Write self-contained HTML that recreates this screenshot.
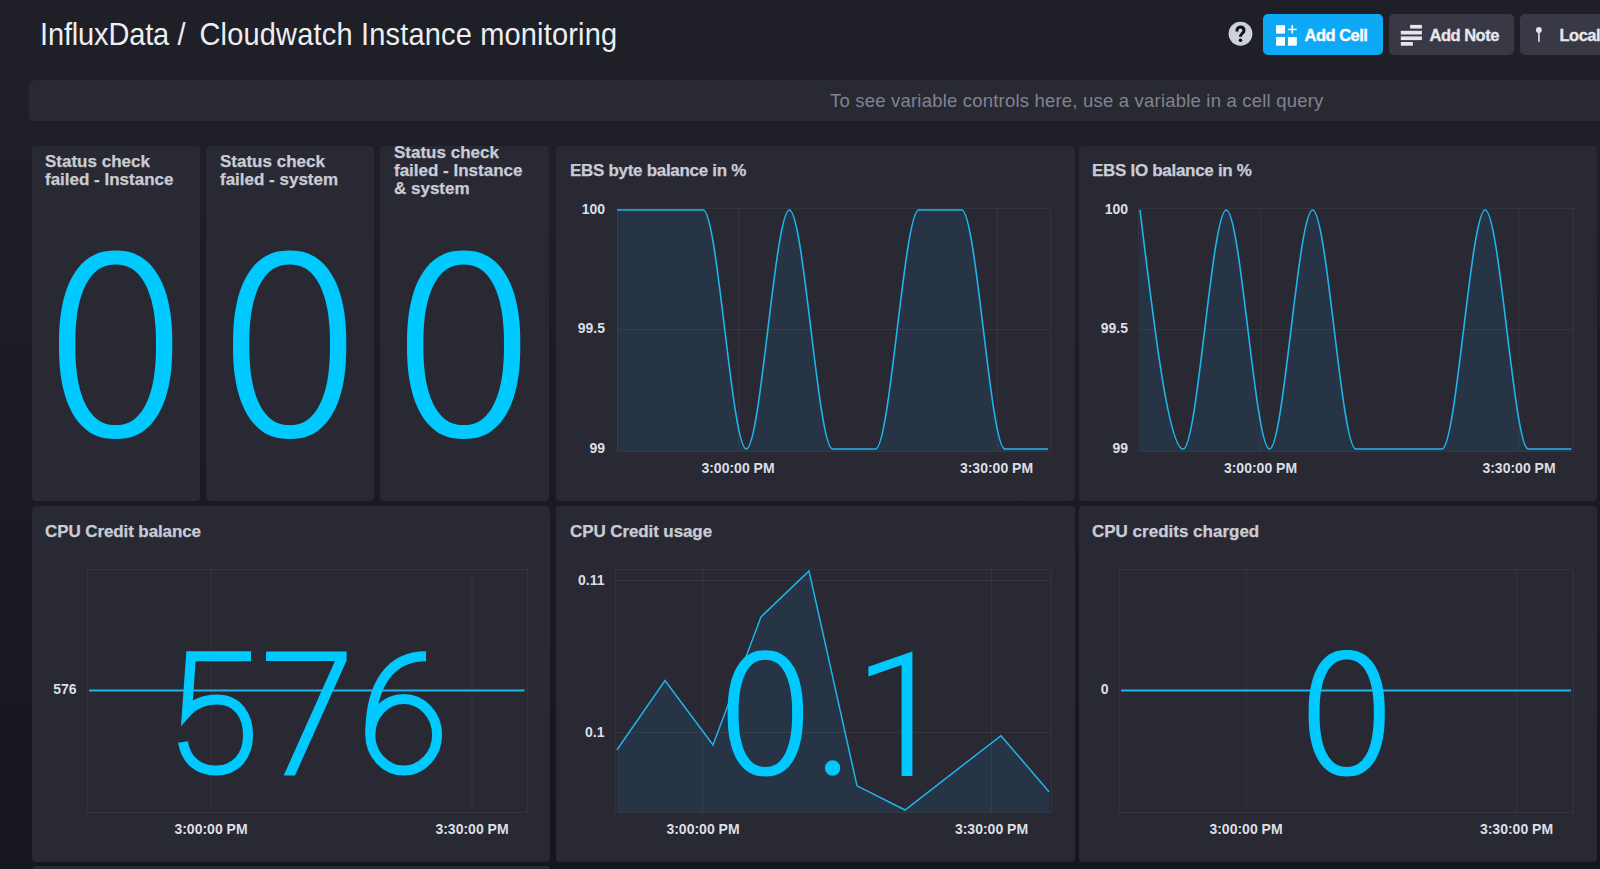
<!DOCTYPE html>
<html><head><meta charset="utf-8">
<style>
*{margin:0;padding:0;box-sizing:border-box}
html,body{width:1600px;height:869px;overflow:hidden}
body{background:linear-gradient(180deg,#1f1f27 0%,#1f1f27 12%,#16161f 100%);font-family:"Liberation Sans",sans-serif;position:relative}
.abs{position:absolute}
.title{top:16px;font-size:29px;line-height:34px;color:#eceef2;white-space:nowrap;transform:scaleY(1.075);transform-origin:0 0}
.vars{left:29px;top:80px;width:1600px;height:41px;background:#292932;border-radius:5px}
.vtext{left:830px;top:90px;font-size:18.5px;line-height:22px;color:#808394;white-space:nowrap;letter-spacing:0.2px}
.cell{background:#292933;border-radius:4px}
.ct{font-size:17px;font-weight:bold;color:#c9ccd6;line-height:18px;white-space:nowrap;-webkit-text-stroke:0.25px currentColor;margin-top:1px}
.btn{border-radius:5px;height:41px;top:14px}
.bt{font-size:16.5px;line-height:20px;-webkit-text-stroke:0.3px currentColor;font-weight:bold;color:#fff;white-space:nowrap;letter-spacing:-0.5px}
svg text.tk{font-family:"Liberation Sans",sans-serif;font-size:14px;font-weight:bold;fill:#dcdfe6}
</style></head><body>
<div class="abs title" style="left:40px;letter-spacing:-0.15px">InfluxData</div>
<div class="abs title" style="left:177.5px">/</div>
<div class="abs title" style="left:199.5px;letter-spacing:0.17px">Cloudwatch Instance monitoring</div>
<svg class="abs" style="left:1228px;top:21px" width="25" height="25" viewBox="0 0 25 25"><circle cx="12.5" cy="12.75" r="11.9" fill="#cfd1d9"/><path d="M8.9,10.4 C8.9,7.4 10.5,6 12.4,6 C14.5,6 16,7.4 16,9.4 C16,12 12.5,12.6 12.5,15.8" fill="none" stroke="#101014" stroke-width="3"/><circle cx="12.5" cy="19.3" r="1.8" fill="#101014"/></svg>
<div class="abs btn" style="left:1263px;width:119.5px;background:#0da8f6"></div>
<div class="abs btn" style="left:1388.5px;width:125.5px;background:#393946"></div>
<div class="abs btn" style="left:1520px;width:100px;background:#393946"></div>
<svg class="abs" style="left:1263px;top:14px" width="340" height="41" viewBox="1263 14 340 41">
<rect x="1276" y="25.2" width="9" height="8.4" fill="#fff"/>
<rect x="1276" y="37" width="9" height="8.7" fill="#fff"/>
<rect x="1288" y="37" width="8.8" height="8.7" fill="#fff"/>
<rect x="1288" y="28.7" width="8.6" height="1.5" fill="#fff"/>
<rect x="1291.5" y="25.2" width="1.5" height="8.4" fill="#fff"/>
<rect x="1410.1" y="24.9" width="11.8" height="3.7" fill="#e4e6ec"/>
<rect x="1400.8" y="30.8" width="21.1" height="3.7" fill="#e4e6ec"/>
<rect x="1400.8" y="36.4" width="21.1" height="3.7" fill="#e4e6ec"/>
<rect x="1400.8" y="42" width="12.1" height="3.7" fill="#e4e6ec"/>
<circle cx="1538.9" cy="30" r="2.9" fill="#e4e6ec"/>
<rect x="1538.1" y="31" width="1.6" height="11" rx="0.8" fill="#e4e6ec"/>
</svg>
<div class="abs bt" style="left:1304.5px;top:24.7px">Add Cell</div>
<div class="abs bt" style="left:1429.5px;top:24.7px;color:#e7e8ee">Add Note</div>
<div class="abs bt" style="left:1559.5px;top:24.7px;color:#e7e8ee">Local</div>
<div class="abs vars"></div>
<div class="abs vtext">To see variable controls here, use a variable in a cell query</div>

<div class="abs cell" style="left:32px;top:146px;width:168px;height:355px"></div>
<div class="abs cell" style="left:206px;top:146px;width:168px;height:355px"></div>
<div class="abs cell" style="left:380px;top:146px;width:169px;height:355px"></div>
<div class="abs cell" style="left:556px;top:146px;width:519px;height:355px"></div>
<div class="abs cell" style="left:1079px;top:146px;width:518px;height:355px"></div>
<div class="abs cell" style="left:32px;top:506px;width:518px;height:356px"></div>
<div class="abs cell" style="left:556px;top:506px;width:519px;height:356px"></div>
<div class="abs cell" style="left:1079px;top:506px;width:518px;height:356px"></div>
<div class="abs cell" style="left:32px;top:866px;width:518px;height:40px"></div>

<div class="abs ct" style="left:45px;top:152px">Status check<br>failed - Instance</div>
<div class="abs ct" style="left:220px;top:152px">Status check<br>failed - system</div>
<div class="abs ct" style="left:394px;top:143px">Status check<br>failed - Instance<br>&amp; system</div>
<div class="abs ct" style="left:570px;top:161px;letter-spacing:-0.3px">EBS byte balance in %</div>
<div class="abs ct" style="left:1092px;top:161px;letter-spacing:-0.3px">EBS IO balance in %</div>
<div class="abs ct" style="left:45px;top:522px;letter-spacing:-0.1px">CPU Credit balance</div>
<div class="abs ct" style="left:570px;top:522px;letter-spacing:-0.1px">CPU Credit usage</div>
<div class="abs ct" style="left:1092px;top:522px">CPU credits charged</div>

<svg class="abs" style="left:0;top:0" width="1600" height="869" viewBox="0 0 1600 869">
<path d="M617.0,210.0 C631.4,210.0 645.7,210.0 660.1,210.0 C674.5,210.0 688.8,210.0 703.2,210.0 C717.6,210.0 731.9,449.0 746.3,449.0 C760.7,449.0 775.0,210.0 789.4,210.0 C803.8,210.0 818.1,449.0 832.5,449.0 C846.9,449.0 861.2,449.0 875.6,449.0 C890.0,449.0 904.3,210.0 918.7,210.0 C933.1,210.0 947.4,210.0 961.8,210.0 C976.2,210.0 990.5,449.0 1004.9,449.0 C1019.3,449.0 1033.6,449.0 1048.0,449.0 L1048.0,451.5 L617,451.5 Z" fill="#263445"/><rect x="617.5" y="208.5" width="433.0" height="243.0" fill="none" stroke="rgba(255,255,255,0.055)" stroke-width="1"/><line x1="738.5" y1="208.5" x2="738.5" y2="451.5" stroke="rgba(255,255,255,0.055)" stroke-width="1"/><line x1="997.5" y1="208.5" x2="997.5" y2="451.5" stroke="rgba(255,255,255,0.055)" stroke-width="1"/><line x1="617.5" y1="329.5" x2="1050.5" y2="329.5" stroke="rgba(255,255,255,0.055)" stroke-width="1"/><path d="M617.0,210.0 C631.4,210.0 645.7,210.0 660.1,210.0 C674.5,210.0 688.8,210.0 703.2,210.0 C717.6,210.0 731.9,449.0 746.3,449.0 C760.7,449.0 775.0,210.0 789.4,210.0 C803.8,210.0 818.1,449.0 832.5,449.0 C846.9,449.0 861.2,449.0 875.6,449.0 C890.0,449.0 904.3,210.0 918.7,210.0 C933.1,210.0 947.4,210.0 961.8,210.0 C976.2,210.0 990.5,449.0 1004.9,449.0 C1019.3,449.0 1033.6,449.0 1048.0,449.0" fill="none" stroke="#1fb5ec" stroke-width="1.6"/><text x="605.0" y="213.5" text-anchor="end" class="tk">100</text><text x="605.0" y="333.0" text-anchor="end" class="tk">99.5</text><text x="605.0" y="452.5" text-anchor="end" class="tk">99</text><text x="738.0" y="473.0" text-anchor="middle" class="tk">3:00:00 PM</text><text x="996.5" y="473.0" text-anchor="middle" class="tk">3:30:00 PM</text><path d="M1140.0,210.0 C1154.4,329.5 1168.8,449.0 1183.2,449.0 C1197.5,449.0 1211.9,210.0 1226.3,210.0 C1240.7,210.0 1255.1,449.0 1269.5,449.0 C1283.8,449.0 1298.2,210.0 1312.6,210.0 C1327.0,210.0 1341.4,449.0 1355.8,449.0 C1370.1,449.0 1384.5,449.0 1398.9,449.0 C1413.3,449.0 1427.7,449.0 1442.0,449.0 C1456.4,449.0 1470.8,210.0 1485.2,210.0 C1499.6,210.0 1514.0,449.0 1528.3,449.0 C1542.7,449.0 1557.1,449.0 1571.5,449.0 L1571.5,451.5 L1140,451.5 Z" fill="#263445"/><rect x="1138.5" y="208.5" width="435.0" height="243.0" fill="none" stroke="rgba(255,255,255,0.055)" stroke-width="1"/><line x1="1260.5" y1="208.5" x2="1260.5" y2="451.5" stroke="rgba(255,255,255,0.055)" stroke-width="1"/><line x1="1519.0" y1="208.5" x2="1519.0" y2="451.5" stroke="rgba(255,255,255,0.055)" stroke-width="1"/><line x1="1138.5" y1="329.5" x2="1573.5" y2="329.5" stroke="rgba(255,255,255,0.055)" stroke-width="1"/><path d="M1140.0,210.0 C1154.4,329.5 1168.8,449.0 1183.2,449.0 C1197.5,449.0 1211.9,210.0 1226.3,210.0 C1240.7,210.0 1255.1,449.0 1269.5,449.0 C1283.8,449.0 1298.2,210.0 1312.6,210.0 C1327.0,210.0 1341.4,449.0 1355.8,449.0 C1370.1,449.0 1384.5,449.0 1398.9,449.0 C1413.3,449.0 1427.7,449.0 1442.0,449.0 C1456.4,449.0 1470.8,210.0 1485.2,210.0 C1499.6,210.0 1514.0,449.0 1528.3,449.0 C1542.7,449.0 1557.1,449.0 1571.5,449.0" fill="none" stroke="#1fb5ec" stroke-width="1.6"/><text x="1128.0" y="213.5" text-anchor="end" class="tk">100</text><text x="1128.0" y="333.0" text-anchor="end" class="tk">99.5</text><text x="1128.0" y="452.5" text-anchor="end" class="tk">99</text><text x="1260.5" y="473.0" text-anchor="middle" class="tk">3:00:00 PM</text><text x="1519.0" y="473.0" text-anchor="middle" class="tk">3:30:00 PM</text><rect x="87.5" y="569.5" width="440.0" height="243.0" fill="none" stroke="rgba(255,255,255,0.055)" stroke-width="1"/><line x1="211.0" y1="569.5" x2="211.0" y2="812.5" stroke="rgba(255,255,255,0.055)" stroke-width="1"/><line x1="472.0" y1="569.5" x2="472.0" y2="812.5" stroke="rgba(255,255,255,0.055)" stroke-width="1"/><line x1="89" y1="690.5" x2="524.5" y2="690.5" stroke="#1fb5ec" stroke-width="2"/><text x="76.5" y="694.0" text-anchor="end" class="tk">576</text><text x="211.0" y="834.0" text-anchor="middle" class="tk">3:00:00 PM</text><text x="472.0" y="834.0" text-anchor="middle" class="tk">3:30:00 PM</text><path d="M617.0,749.7 L665.0,680.5 L713.0,745.0 L761.0,616.8 L809.0,570.9 L857.0,785.8 L905.0,810.0 L953.0,772.8 L1001.0,735.7 L1049.0,791.7 L1049.0,812.5 L617,812.5 Z" fill="#263445"/><rect x="615.5" y="569.5" width="436.0" height="243.0" fill="none" stroke="rgba(255,255,255,0.055)" stroke-width="1"/><line x1="703.0" y1="569.5" x2="703.0" y2="812.5" stroke="rgba(255,255,255,0.055)" stroke-width="1"/><line x1="991.5" y1="569.5" x2="991.5" y2="812.5" stroke="rgba(255,255,255,0.055)" stroke-width="1"/><line x1="615.5" y1="580.5" x2="1051.5" y2="580.5" stroke="rgba(255,255,255,0.055)" stroke-width="1"/><line x1="615.5" y1="732.5" x2="1051.5" y2="732.5" stroke="rgba(255,255,255,0.055)" stroke-width="1"/><path d="M617.0,749.7 L665.0,680.5 L713.0,745.0 L761.0,616.8 L809.0,570.9 L857.0,785.8 L905.0,810.0 L953.0,772.8 L1001.0,735.7 L1049.0,791.7" fill="none" stroke="#1fb5ec" stroke-width="1.5" stroke-linejoin="miter"/><text x="604.5" y="585.0" text-anchor="end" class="tk">0.11</text><text x="604.5" y="737.0" text-anchor="end" class="tk">0.1</text><text x="703.0" y="834.0" text-anchor="middle" class="tk">3:00:00 PM</text><text x="991.5" y="834.0" text-anchor="middle" class="tk">3:30:00 PM</text><rect x="1119.5" y="569.5" width="454.0" height="243.0" fill="none" stroke="rgba(255,255,255,0.055)" stroke-width="1"/><line x1="1246.0" y1="569.5" x2="1246.0" y2="812.5" stroke="rgba(255,255,255,0.055)" stroke-width="1"/><line x1="1516.5" y1="569.5" x2="1516.5" y2="812.5" stroke="rgba(255,255,255,0.055)" stroke-width="1"/><line x1="1121" y1="690.5" x2="1571" y2="690.5" stroke="#1fb5ec" stroke-width="2"/><text x="1108.5" y="694.0" text-anchor="end" class="tk">0</text><text x="1246.0" y="834.0" text-anchor="middle" class="tk">3:00:00 PM</text><text x="1516.5" y="834.0" text-anchor="middle" class="tk">3:30:00 PM</text>
<path d="M172.3,344.8 L172.2,354.0 L171.9,361.5 L171.4,368.2 L170.7,374.6 L169.7,380.7 L168.6,386.4 L167.3,391.8 L165.8,397.0 L164.1,401.9 L162.2,406.5 L160.1,410.9 L157.8,414.9 L155.4,418.7 L152.8,422.2 L150.0,425.3 L147.1,428.1 L143.9,430.7 L140.7,432.9 L137.2,434.7 L133.6,436.3 L129.7,437.5 L125.7,438.3 L121.2,438.8 L115.7,439.0 L110.1,438.8 L105.6,438.3 L101.6,437.5 L97.7,436.3 L94.1,434.7 L90.6,432.9 L87.4,430.7 L84.2,428.1 L81.3,425.3 L78.5,422.2 L75.9,418.7 L73.5,414.9 L71.2,410.9 L69.1,406.5 L67.2,401.9 L65.5,397.0 L64.0,391.8 L62.7,386.4 L61.6,380.7 L60.6,374.6 L59.9,368.2 L59.4,361.5 L59.1,354.0 L59.0,344.8 L59.1,335.6 L59.4,328.1 L59.9,321.4 L60.6,315.0 L61.6,308.9 L62.7,303.2 L64.0,297.8 L65.5,292.6 L67.2,287.7 L69.1,283.1 L71.2,278.7 L73.5,274.7 L75.9,270.9 L78.5,267.4 L81.3,264.3 L84.2,261.5 L87.4,258.9 L90.6,256.7 L94.1,254.9 L97.7,253.3 L101.6,252.1 L105.6,251.3 L110.1,250.8 L115.6,250.6 L121.2,250.8 L125.7,251.3 L129.7,252.1 L133.6,253.3 L137.2,254.9 L140.7,256.7 L143.9,258.9 L147.1,261.5 L150.0,264.3 L152.8,267.4 L155.4,270.9 L157.8,274.7 L160.1,278.7 L162.2,283.1 L164.1,287.7 L165.8,292.6 L167.3,297.8 L168.6,303.2 L169.7,308.9 L170.7,315.0 L171.4,321.4 L171.9,328.1 L172.2,335.6 Z M156.0,344.8 L155.9,352.7 L155.7,359.0 L155.3,364.8 L154.8,370.2 L154.2,375.3 L153.4,380.2 L152.4,384.9 L151.4,389.3 L150.1,393.4 L148.8,397.4 L147.3,401.1 L145.7,404.5 L144.0,407.7 L142.1,410.7 L140.1,413.3 L138.0,415.8 L135.8,417.9 L133.5,419.8 L131.0,421.4 L128.4,422.7 L125.7,423.7 L122.8,424.4 L119.6,424.9 L115.7,425.0 L111.7,424.9 L108.5,424.4 L105.6,423.7 L102.9,422.7 L100.3,421.4 L97.8,419.8 L95.5,417.9 L93.3,415.8 L91.2,413.3 L89.2,410.7 L87.3,407.7 L85.6,404.5 L84.0,401.1 L82.5,397.4 L81.2,393.4 L79.9,389.3 L78.9,384.9 L77.9,380.2 L77.1,375.3 L76.5,370.2 L76.0,364.8 L75.6,359.0 L75.4,352.7 L75.3,344.8 L75.4,336.9 L75.6,330.6 L76.0,324.8 L76.5,319.4 L77.1,314.3 L77.9,309.4 L78.9,304.7 L79.9,300.3 L81.2,296.2 L82.5,292.2 L84.0,288.5 L85.6,285.1 L87.3,281.9 L89.2,278.9 L91.2,276.3 L93.3,273.8 L95.5,271.7 L97.8,269.8 L100.3,268.2 L102.9,266.9 L105.6,265.9 L108.5,265.2 L111.7,264.7 L115.6,264.6 L119.6,264.7 L122.8,265.2 L125.7,265.9 L128.4,266.9 L131.0,268.2 L133.5,269.8 L135.8,271.7 L138.0,273.8 L140.1,276.3 L142.1,278.9 L144.0,281.9 L145.7,285.1 L147.3,288.5 L148.8,292.2 L150.1,296.2 L151.4,300.3 L152.4,304.7 L153.4,309.4 L154.2,314.3 L154.8,319.4 L155.3,324.8 L155.7,330.6 L155.9,336.9 Z" fill="#00c9ff" fill-rule="evenodd"/><path d="M346.3,344.8 L346.2,354.0 L345.9,361.5 L345.4,368.2 L344.7,374.6 L343.7,380.7 L342.6,386.4 L341.3,391.8 L339.8,397.0 L338.1,401.9 L336.2,406.5 L334.1,410.9 L331.8,414.9 L329.4,418.7 L326.8,422.2 L324.0,425.3 L321.1,428.1 L317.9,430.7 L314.7,432.9 L311.2,434.7 L307.6,436.3 L303.7,437.5 L299.7,438.3 L295.2,438.8 L289.7,439.0 L284.1,438.8 L279.6,438.3 L275.6,437.5 L271.7,436.3 L268.1,434.7 L264.6,432.9 L261.4,430.7 L258.2,428.1 L255.3,425.3 L252.5,422.2 L249.9,418.7 L247.5,414.9 L245.2,410.9 L243.1,406.5 L241.2,401.9 L239.5,397.0 L238.0,391.8 L236.7,386.4 L235.6,380.7 L234.6,374.6 L233.9,368.2 L233.4,361.5 L233.1,354.0 L233.0,344.8 L233.1,335.6 L233.4,328.1 L233.9,321.4 L234.6,315.0 L235.6,308.9 L236.7,303.2 L238.0,297.8 L239.5,292.6 L241.2,287.7 L243.1,283.1 L245.2,278.7 L247.5,274.7 L249.9,270.9 L252.5,267.4 L255.3,264.3 L258.2,261.5 L261.4,258.9 L264.6,256.7 L268.1,254.9 L271.7,253.3 L275.6,252.1 L279.6,251.3 L284.1,250.8 L289.6,250.6 L295.2,250.8 L299.7,251.3 L303.7,252.1 L307.6,253.3 L311.2,254.9 L314.7,256.7 L317.9,258.9 L321.1,261.5 L324.0,264.3 L326.8,267.4 L329.4,270.9 L331.8,274.7 L334.1,278.7 L336.2,283.1 L338.1,287.7 L339.8,292.6 L341.3,297.8 L342.6,303.2 L343.7,308.9 L344.7,315.0 L345.4,321.4 L345.9,328.1 L346.2,335.6 Z M330.0,344.8 L329.9,352.7 L329.7,359.0 L329.3,364.8 L328.8,370.2 L328.2,375.3 L327.4,380.2 L326.4,384.9 L325.4,389.3 L324.1,393.4 L322.8,397.4 L321.3,401.1 L319.7,404.5 L318.0,407.7 L316.1,410.7 L314.1,413.3 L312.0,415.8 L309.8,417.9 L307.5,419.8 L305.0,421.4 L302.4,422.7 L299.7,423.7 L296.8,424.4 L293.6,424.9 L289.7,425.0 L285.7,424.9 L282.5,424.4 L279.6,423.7 L276.9,422.7 L274.3,421.4 L271.8,419.8 L269.5,417.9 L267.3,415.8 L265.2,413.3 L263.2,410.7 L261.3,407.7 L259.6,404.5 L258.0,401.1 L256.5,397.4 L255.2,393.4 L253.9,389.3 L252.9,384.9 L251.9,380.2 L251.1,375.3 L250.5,370.2 L250.0,364.8 L249.6,359.0 L249.4,352.7 L249.3,344.8 L249.4,336.9 L249.6,330.6 L250.0,324.8 L250.5,319.4 L251.1,314.3 L251.9,309.4 L252.9,304.7 L253.9,300.3 L255.2,296.2 L256.5,292.2 L258.0,288.5 L259.6,285.1 L261.3,281.9 L263.2,278.9 L265.2,276.3 L267.3,273.8 L269.5,271.7 L271.8,269.8 L274.3,268.2 L276.9,266.9 L279.6,265.9 L282.5,265.2 L285.7,264.7 L289.6,264.6 L293.6,264.7 L296.8,265.2 L299.7,265.9 L302.4,266.9 L305.0,268.2 L307.5,269.8 L309.8,271.7 L312.0,273.8 L314.1,276.3 L316.1,278.9 L318.0,281.9 L319.7,285.1 L321.3,288.5 L322.8,292.2 L324.1,296.2 L325.4,300.3 L326.4,304.7 L327.4,309.4 L328.2,314.3 L328.8,319.4 L329.3,324.8 L329.7,330.6 L329.9,336.9 Z" fill="#00c9ff" fill-rule="evenodd"/><path d="M520.3,344.8 L520.2,354.0 L519.9,361.5 L519.4,368.2 L518.7,374.6 L517.7,380.7 L516.6,386.4 L515.3,391.8 L513.8,397.0 L512.1,401.9 L510.2,406.5 L508.1,410.9 L505.8,414.9 L503.4,418.7 L500.8,422.2 L498.0,425.3 L495.1,428.1 L491.9,430.7 L488.7,432.9 L485.2,434.7 L481.6,436.3 L477.7,437.5 L473.7,438.3 L469.2,438.8 L463.7,439.0 L458.1,438.8 L453.6,438.3 L449.6,437.5 L445.7,436.3 L442.1,434.7 L438.6,432.9 L435.4,430.7 L432.2,428.1 L429.3,425.3 L426.5,422.2 L423.9,418.7 L421.5,414.9 L419.2,410.9 L417.1,406.5 L415.2,401.9 L413.5,397.0 L412.0,391.8 L410.7,386.4 L409.6,380.7 L408.6,374.6 L407.9,368.2 L407.4,361.5 L407.1,354.0 L407.0,344.8 L407.1,335.6 L407.4,328.1 L407.9,321.4 L408.6,315.0 L409.6,308.9 L410.7,303.2 L412.0,297.8 L413.5,292.6 L415.2,287.7 L417.1,283.1 L419.2,278.7 L421.5,274.7 L423.9,270.9 L426.5,267.4 L429.3,264.3 L432.2,261.5 L435.4,258.9 L438.6,256.7 L442.1,254.9 L445.7,253.3 L449.6,252.1 L453.6,251.3 L458.1,250.8 L463.6,250.6 L469.2,250.8 L473.7,251.3 L477.7,252.1 L481.6,253.3 L485.2,254.9 L488.7,256.7 L491.9,258.9 L495.1,261.5 L498.0,264.3 L500.8,267.4 L503.4,270.9 L505.8,274.7 L508.1,278.7 L510.2,283.1 L512.1,287.7 L513.8,292.6 L515.3,297.8 L516.6,303.2 L517.7,308.9 L518.7,315.0 L519.4,321.4 L519.9,328.1 L520.2,335.6 Z M504.0,344.8 L503.9,352.7 L503.7,359.0 L503.3,364.8 L502.8,370.2 L502.2,375.3 L501.4,380.2 L500.4,384.9 L499.4,389.3 L498.1,393.4 L496.8,397.4 L495.3,401.1 L493.7,404.5 L492.0,407.7 L490.1,410.7 L488.1,413.3 L486.0,415.8 L483.8,417.9 L481.5,419.8 L479.0,421.4 L476.4,422.7 L473.7,423.7 L470.8,424.4 L467.6,424.9 L463.7,425.0 L459.7,424.9 L456.5,424.4 L453.6,423.7 L450.9,422.7 L448.3,421.4 L445.8,419.8 L443.5,417.9 L441.3,415.8 L439.2,413.3 L437.2,410.7 L435.3,407.7 L433.6,404.5 L432.0,401.1 L430.5,397.4 L429.2,393.4 L427.9,389.3 L426.9,384.9 L425.9,380.2 L425.1,375.3 L424.5,370.2 L424.0,364.8 L423.6,359.0 L423.4,352.7 L423.3,344.8 L423.4,336.9 L423.6,330.6 L424.0,324.8 L424.5,319.4 L425.1,314.3 L425.9,309.4 L426.9,304.7 L427.9,300.3 L429.2,296.2 L430.5,292.2 L432.0,288.5 L433.6,285.1 L435.3,281.9 L437.2,278.9 L439.2,276.3 L441.3,273.8 L443.5,271.7 L445.8,269.8 L448.3,268.2 L450.9,266.9 L453.6,265.9 L456.5,265.2 L459.7,264.7 L463.6,264.6 L467.6,264.7 L470.8,265.2 L473.7,265.9 L476.4,266.9 L479.0,268.2 L481.5,269.8 L483.8,271.7 L486.0,273.8 L488.1,276.3 L490.1,278.9 L492.0,281.9 L493.7,285.1 L495.3,288.5 L496.8,292.2 L498.1,296.2 L499.4,300.3 L500.4,304.7 L501.4,309.4 L502.2,314.3 L502.8,319.4 L503.3,324.8 L503.7,330.6 L503.9,336.9 Z" fill="#00c9ff" fill-rule="evenodd"/><path d="M803.1,713.3 L803.0,719.5 L802.8,724.5 L802.5,729.0 L802.0,733.3 L801.4,737.3 L800.6,741.2 L799.8,744.8 L798.8,748.3 L797.6,751.6 L796.3,754.7 L795.0,757.6 L793.5,760.3 L791.8,762.8 L790.1,765.1 L788.2,767.2 L786.3,769.1 L784.2,770.8 L782.0,772.3 L779.7,773.5 L777.3,774.6 L774.7,775.4 L772.0,775.9 L769.1,776.3 L765.4,776.4 L761.6,776.3 L758.7,775.9 L756.0,775.4 L753.4,774.6 L751.0,773.5 L748.7,772.3 L746.5,770.8 L744.4,769.1 L742.5,767.2 L740.6,765.1 L738.9,762.8 L737.2,760.3 L735.7,757.6 L734.4,754.7 L733.1,751.6 L731.9,748.3 L730.9,744.8 L730.1,741.2 L729.3,737.3 L728.7,733.3 L728.2,729.0 L727.9,724.5 L727.7,719.5 L727.6,713.4 L727.7,707.2 L727.9,702.2 L728.2,697.7 L728.7,693.4 L729.3,689.4 L730.1,685.5 L730.9,681.9 L731.9,678.4 L733.1,675.1 L734.4,672.0 L735.7,669.1 L737.2,666.4 L738.9,663.9 L740.6,661.6 L742.5,659.5 L744.4,657.6 L746.5,655.9 L748.7,654.4 L751.0,653.2 L753.4,652.1 L756.0,651.3 L758.7,650.8 L761.6,650.4 L765.3,650.3 L769.1,650.4 L772.0,650.8 L774.7,651.3 L777.3,652.1 L779.7,653.2 L782.0,654.4 L784.2,655.9 L786.3,657.6 L788.2,659.5 L790.1,661.6 L791.8,663.9 L793.5,666.4 L795.0,669.1 L796.3,672.0 L797.6,675.1 L798.8,678.4 L799.8,681.9 L800.6,685.5 L801.4,689.4 L802.0,693.4 L802.5,697.7 L802.8,702.2 L803.0,707.2 Z M792.1,713.3 L792.1,718.6 L791.9,722.8 L791.7,726.7 L791.3,730.3 L790.9,733.7 L790.4,737.0 L789.7,740.1 L789.0,743.0 L788.2,745.8 L787.3,748.5 L786.3,750.9 L785.3,753.2 L784.1,755.4 L782.9,757.3 L781.6,759.1 L780.2,760.7 L778.7,762.2 L777.2,763.4 L775.5,764.5 L773.8,765.3 L772.0,766.0 L770.1,766.5 L768.0,766.8 L765.4,766.9 L762.7,766.8 L760.6,766.5 L758.7,766.0 L756.9,765.3 L755.2,764.5 L753.5,763.4 L752.0,762.2 L750.5,760.7 L749.1,759.1 L747.8,757.3 L746.6,755.4 L745.4,753.2 L744.4,750.9 L743.4,748.5 L742.5,745.8 L741.7,743.0 L741.0,740.1 L740.3,737.0 L739.8,733.7 L739.4,730.3 L739.0,726.7 L738.8,722.8 L738.6,718.6 L738.6,713.4 L738.6,708.1 L738.8,703.9 L739.0,700.0 L739.4,696.4 L739.8,693.0 L740.3,689.7 L741.0,686.6 L741.7,683.7 L742.5,680.9 L743.4,678.2 L744.4,675.8 L745.4,673.5 L746.6,671.3 L747.8,669.4 L749.1,667.6 L750.5,666.0 L752.0,664.5 L753.5,663.3 L755.2,662.2 L756.9,661.4 L758.7,660.7 L760.6,660.2 L762.7,659.9 L765.3,659.8 L768.0,659.9 L770.1,660.2 L772.0,660.7 L773.8,661.4 L775.5,662.2 L777.2,663.3 L778.7,664.5 L780.2,666.0 L781.6,667.6 L782.9,669.4 L784.1,671.3 L785.3,673.5 L786.3,675.8 L787.3,678.2 L788.2,680.9 L789.0,683.7 L789.7,686.6 L790.4,689.7 L790.9,693.0 L791.3,696.4 L791.7,700.0 L791.9,703.9 L792.1,708.1 Z" fill="#00c9ff" fill-rule="evenodd"/><path d="M1384.8,713.2 L1384.7,719.4 L1384.5,724.4 L1384.2,728.9 L1383.7,733.2 L1383.1,737.3 L1382.3,741.1 L1381.4,744.8 L1380.4,748.2 L1379.3,751.5 L1378.0,754.6 L1376.6,757.5 L1375.1,760.3 L1373.4,762.8 L1371.7,765.1 L1369.8,767.2 L1367.8,769.1 L1365.7,770.8 L1363.5,772.3 L1361.2,773.5 L1358.8,774.6 L1356.2,775.4 L1353.4,775.9 L1350.4,776.3 L1346.7,776.4 L1343.0,776.3 L1340.0,775.9 L1337.2,775.4 L1334.6,774.6 L1332.2,773.5 L1329.9,772.3 L1327.7,770.8 L1325.6,769.1 L1323.6,767.2 L1321.7,765.1 L1320.0,762.8 L1318.3,760.3 L1316.8,757.5 L1315.4,754.6 L1314.1,751.5 L1313.0,748.2 L1312.0,744.8 L1311.1,741.1 L1310.3,737.3 L1309.7,733.2 L1309.2,728.9 L1308.9,724.4 L1308.7,719.4 L1308.6,713.2 L1308.7,707.0 L1308.9,702.0 L1309.2,697.5 L1309.7,693.2 L1310.3,689.1 L1311.1,685.3 L1312.0,681.6 L1313.0,678.2 L1314.1,674.9 L1315.4,671.8 L1316.8,668.9 L1318.3,666.1 L1320.0,663.6 L1321.7,661.3 L1323.6,659.2 L1325.6,657.3 L1327.7,655.6 L1329.9,654.1 L1332.2,652.9 L1334.6,651.8 L1337.2,651.0 L1340.0,650.5 L1343.0,650.1 L1346.7,650.0 L1350.4,650.1 L1353.4,650.5 L1356.2,651.0 L1358.8,651.8 L1361.2,652.9 L1363.5,654.1 L1365.7,655.6 L1367.8,657.3 L1369.8,659.2 L1371.7,661.3 L1373.4,663.6 L1375.1,666.1 L1376.6,668.9 L1378.0,671.8 L1379.3,674.9 L1380.4,678.2 L1381.4,681.6 L1382.3,685.3 L1383.1,689.1 L1383.7,693.2 L1384.2,697.5 L1384.5,702.0 L1384.7,707.0 Z M1373.8,713.2 L1373.8,718.5 L1373.6,722.7 L1373.4,726.6 L1373.0,730.2 L1372.6,733.6 L1372.0,736.9 L1371.4,740.0 L1370.7,743.0 L1369.9,745.8 L1369.0,748.4 L1368.0,750.9 L1366.9,753.2 L1365.7,755.3 L1364.5,757.3 L1363.1,759.1 L1361.7,760.7 L1360.2,762.1 L1358.7,763.4 L1357.0,764.5 L1355.3,765.3 L1353.4,766.0 L1351.5,766.5 L1349.4,766.8 L1346.7,766.9 L1344.0,766.8 L1341.9,766.5 L1340.0,766.0 L1338.1,765.3 L1336.4,764.5 L1334.7,763.4 L1333.2,762.1 L1331.7,760.7 L1330.3,759.1 L1328.9,757.3 L1327.7,755.3 L1326.5,753.2 L1325.4,750.9 L1324.4,748.4 L1323.5,745.8 L1322.7,743.0 L1322.0,740.0 L1321.4,736.9 L1320.8,733.6 L1320.4,730.2 L1320.0,726.6 L1319.8,722.7 L1319.6,718.5 L1319.6,713.2 L1319.6,707.9 L1319.8,703.7 L1320.0,699.8 L1320.4,696.2 L1320.8,692.8 L1321.4,689.5 L1322.0,686.4 L1322.7,683.4 L1323.5,680.6 L1324.4,678.0 L1325.4,675.5 L1326.5,673.2 L1327.7,671.1 L1328.9,669.1 L1330.3,667.3 L1331.7,665.7 L1333.2,664.3 L1334.7,663.0 L1336.4,661.9 L1338.1,661.1 L1340.0,660.4 L1341.9,659.9 L1344.0,659.6 L1346.7,659.5 L1349.4,659.6 L1351.5,659.9 L1353.4,660.4 L1355.3,661.1 L1357.0,661.9 L1358.7,663.0 L1360.2,664.3 L1361.7,665.7 L1363.1,667.3 L1364.5,669.1 L1365.7,671.1 L1366.9,673.2 L1368.0,675.5 L1369.0,678.0 L1369.9,680.6 L1370.7,683.4 L1371.4,686.4 L1372.0,689.5 L1372.6,692.8 L1373.0,696.2 L1373.4,699.8 L1373.6,703.7 L1373.8,707.9 Z" fill="#00c9ff" fill-rule="evenodd"/><circle cx="832.6" cy="768" r="7.7" fill="#00c9ff"/><path d="M912.4,651.5 L912.4,776 L901.6,776 L901.6,664.9 L868.4,676.4 L868.4,666.7 Z" fill="#00c9ff"/><path d="M251,656.3 L191,656.3 L187,712 C195,703 206,699.5 217,699.5 C238,699.5 248,716 248,735 C248,757 235,770.5 216,770.5 C198,770.5 186,760 183,742" fill="none" stroke="#00c9ff" stroke-width="10"/><path d="M266,651.6 L346.6,651.6 L346.6,660.5 L295,775.5 L283.7,775.5 L335,661 L266,661 Z" fill="#00c9ff"/><ellipse cx="403.7" cy="734.75" rx="33.4" ry="35.75" fill="none" stroke="#00c9ff" stroke-width="10"/><path d="M426,656.3 C392,656.3 370.3,682 370.3,734.75" fill="none" stroke="#00c9ff" stroke-width="10"/>
</svg>
</body></html>
